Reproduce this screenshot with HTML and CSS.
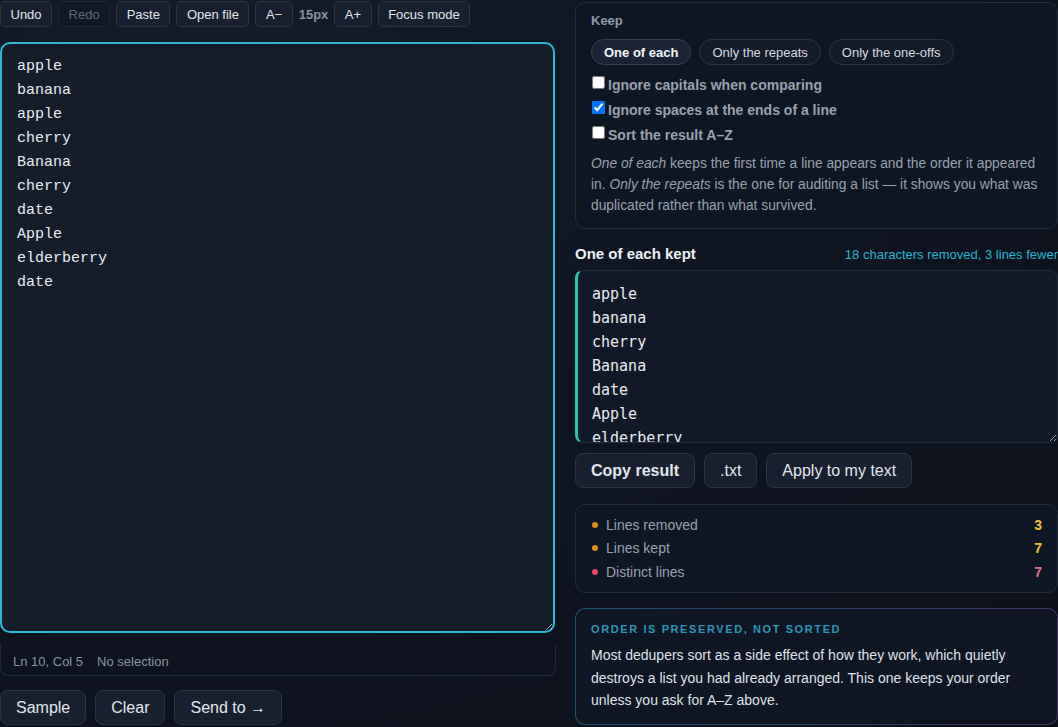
FILE: index.html
```html
<!DOCTYPE html>
<html lang="en">
<head>
    <meta charset="UTF-8">
    <meta name="viewport" content="width=device-width, initial-scale=1.0">
    <title>Remove duplicate lines</title>
    <link rel="stylesheet" href="styles.css">
</head>
<body>
    <div class="app">
        <!-- left side: the text being worked on -->
        <section class="editor">
            <div class="toolbar">
                <button class="tool">Undo</button>
                <button class="tool" disabled>Redo</button>
                <button class="tool">Paste</button>
                <button class="tool">Open file</button>
                <button class="tool">A−</button>
                <span class="font-size">15px</span>
                <button class="tool">A+</button>
                <button class="tool">Focus mode</button>
            </div>
            <textarea class="source" spellcheck="false">apple
banana
apple
cherry
Banana
cherry
date
Apple
elderberry
date</textarea>
            <div class="status">
                <span>Ln 10, Col 5</span>
                <span>No selection</span>
            </div>
            <div class="actions">
                <button class="btn">Sample</button>
                <button class="btn">Clear</button>
                <button class="btn">Send to →</button>
            </div>
        </section>

        <!-- right side: options and the result -->
        <section class="side">
            <div class="panel options">
                <div class="label">Keep</div>
                <div class="pills">
                    <button class="pill active">One of each</button>
                    <button class="pill">Only the repeats</button>
                    <button class="pill">Only the one-offs</button>
                </div>
                <label class="check"><input type="checkbox">Ignore capitals when comparing</label>
                <label class="check"><input type="checkbox" checked>Ignore spaces at the ends of a line</label>
                <label class="check"><input type="checkbox">Sort the result A–Z</label>
                <p class="hint"><em>One of each</em> keeps the first time a line appears and the order it appeared in. <em>Only the repeats</em> is the one for auditing a list — it shows you what was duplicated rather than what survived.</p>
            </div>

            <div class="result-head">
                <h2>One of each kept</h2>
                <span class="delta">18 characters removed, 3 lines fewer</span>
            </div>
            <textarea class="result" readonly>apple
banana
cherry
Banana
date
Apple
elderberry</textarea>

            <div class="actions">
                <button class="btn strong">Copy result</button>
                <button class="btn">.txt</button>
                <button class="btn">Apply to my text</button>
            </div>

            <ul class="panel stats">
                <li><span class="dot amber"></span><span class="name">Lines removed</span><b class="num yellow">3</b></li>
                <li><span class="dot amber"></span><span class="name">Lines kept</span><b class="num yellow">7</b></li>
                <li><span class="dot rose"></span><span class="name">Distinct lines</span><b class="num pink">7</b></li>
            </ul>

            <div class="note">
                <div class="note-title">Order is preserved, not sorted</div>
                <p>Most dedupers sort as a side effect of how they work, which quietly destroys a list you had already arranged. This one keeps your order unless you ask for A–Z above.</p>
            </div>
        </section>
    </div>
</body>
</html>
```

FILE: styles.css
```css
* {
    margin: 0;
    padding: 0;
    box-sizing: border-box;
}
html, body {
    height: 100%;
}
body {
    font-family: "Liberation Sans", Arial, sans-serif;
    background: radial-gradient(ellipse at 20% 10%, #131b29 0%, #0e1420 55%, #0b1019 100%);
    color: #e6e9ee;
    overflow: hidden;
}
.app {
    display: grid;
    grid-template-columns: 556px 483px;
    column-gap: 19px;
    height: 727px;
}

/* buttons */
button {
    font-family: inherit;
    color: #e2e6ec;
    background: #182030;
    border: 1px solid #2a3444;
    cursor: pointer;
}
.tool {
    height: 26px;
    padding: 0 9.5px;
    font-size: 13px;
    border-radius: 5px;
}
.tool:disabled {
    color: #5f6876;
    background: #111824;
    border-color: #1e2633;
    cursor: default;
}
.btn {
    height: 35px;
    padding: 0 15px;
    font-size: 16px;
    border-radius: 8px;
}
.btn.strong {
    font-weight: 700;
}

/* editor column */
.editor {
    display: flex;
    flex-direction: column;
    padding-top: 1px;
}
.toolbar {
    display: flex;
    align-items: center;
    gap: 6px;
}
.font-size {
    font-size: 13px;
    font-weight: 700;
    color: #8a93a1;
}
.source {
    margin-top: 15px;
    height: 591px;
    width: 555px;
    padding: 11px 15px 10px;
    font-family: "Liberation Mono", monospace;
    font-size: 15px;
    line-height: 24px;
    color: #e8ecf1;
    background: #151d2b;
    border: 2px solid #2bb8d4;
    border-radius: 10px;
    outline: none;
    resize: vertical;
}
.status {
    margin-top: 12px;
    height: 31px;
    display: flex;
    align-items: center;
    gap: 14px;
    padding: 2px 12px 0;
    font-size: 13px;
    color: #8a93a1;
    border: 1px solid #222b3a;
    border-top: none;
    border-radius: 0 0 8px 8px;
}
.actions {
    display: flex;
    gap: 9px;
}
.editor .actions {
    margin-top: 14px;
}

/* side column */
.side {
    display: flex;
    flex-direction: column;
    padding-top: 2px;
}
.panel {
    background: #0f1623;
    border: 1px solid #222c3c;
    border-radius: 10px;
}
.options {
    height: 227px;
    padding: 10px 15px;
}
.label {
    font-size: 13px;
    font-weight: 700;
    line-height: 16px;
    color: #8f98a6;
    margin-bottom: 10px;
}
.pills {
    display: flex;
    gap: 8px;
    margin-bottom: 7px;
}
.pill {
    height: 26px;
    padding: 0 12px;
    font-size: 13px;
    color: #d5dae2;
    background: #141b28;
    border-color: #2a3343;
    border-radius: 13px;
}
.pill.active {
    font-weight: 700;
    color: #f3f5f8;
    background: #1b2434;
    border-color: #334052;
}
.check {
    display: flex;
    align-items: center;
    height: 25px;
    font-size: 14px;
    font-weight: 700;
    color: #99a2b0;
}
.check input {
    margin: 0 3px 4px 1px;
}
.hint {
    margin-top: 6px;
    font-size: 13.8px;
    line-height: 21px;
    color: #98a1af;
}

.result-head {
    margin-top: 16px;
    display: flex;
    justify-content: space-between;
    align-items: baseline;
    height: 18px;
}
.result-head h2 {
    font-size: 15px;
    font-weight: 700;
    color: #eef1f5;
}
.delta {
    font-size: 13px;
    color: #27b4d0;
    white-space: nowrap;
}
.result {
    margin-top: 7px;
    height: 173px;
    width: 483px;
    padding: 11px 14px;
    font-family: "DejaVu Sans Mono", monospace;
    font-size: 15px;
    line-height: 24px;
    color: #e8ecf1;
    background: #111827;
    border: 1px solid #222c3c;
    border-left: 3px solid #2cc4a8;
    border-radius: 8px;
    outline: none;
    resize: vertical;
    overflow: hidden;
}
.side .actions {
    margin-top: 10px;
}

.stats {
    list-style: none;
    margin-top: 16px;
    height: 89px;
    padding: 8px 15px;
}
.stats li {
    display: flex;
    align-items: center;
    height: 23.5px;
    font-size: 14px;
}
.dot {
    width: 6px;
    height: 6px;
    border-radius: 50%;
    margin: 0 8px 0 1px;
}
.dot.amber { background: #e08a1c; }
.dot.rose { background: #e4456c; }
.name {
    flex: 1;
    color: #98a1af;
}
.num {
    font-size: 14px;
}
.num.yellow { color: #f2c230; }
.num.pink { color: #e06f8d; }

.note {
    margin-top: 15px;
    height: 117px;
    padding: 13px 15px;
    border: 1px solid transparent;
    border-radius: 10px;
    background:
        linear-gradient(#0f1522, #0f1522) padding-box,
        linear-gradient(90deg, #1d5673, #2b3f66 55%, #40335f) border-box;
}
.note-title {
    font-size: 11px;
    font-weight: 700;
    line-height: 14px;
    letter-spacing: 1.6px;
    text-transform: uppercase;
    color: #2a98bb;
}
.note p {
    margin-top: 8px;
    font-size: 14px;
    line-height: 22.5px;
    color: #dfe3ea;
}
```
